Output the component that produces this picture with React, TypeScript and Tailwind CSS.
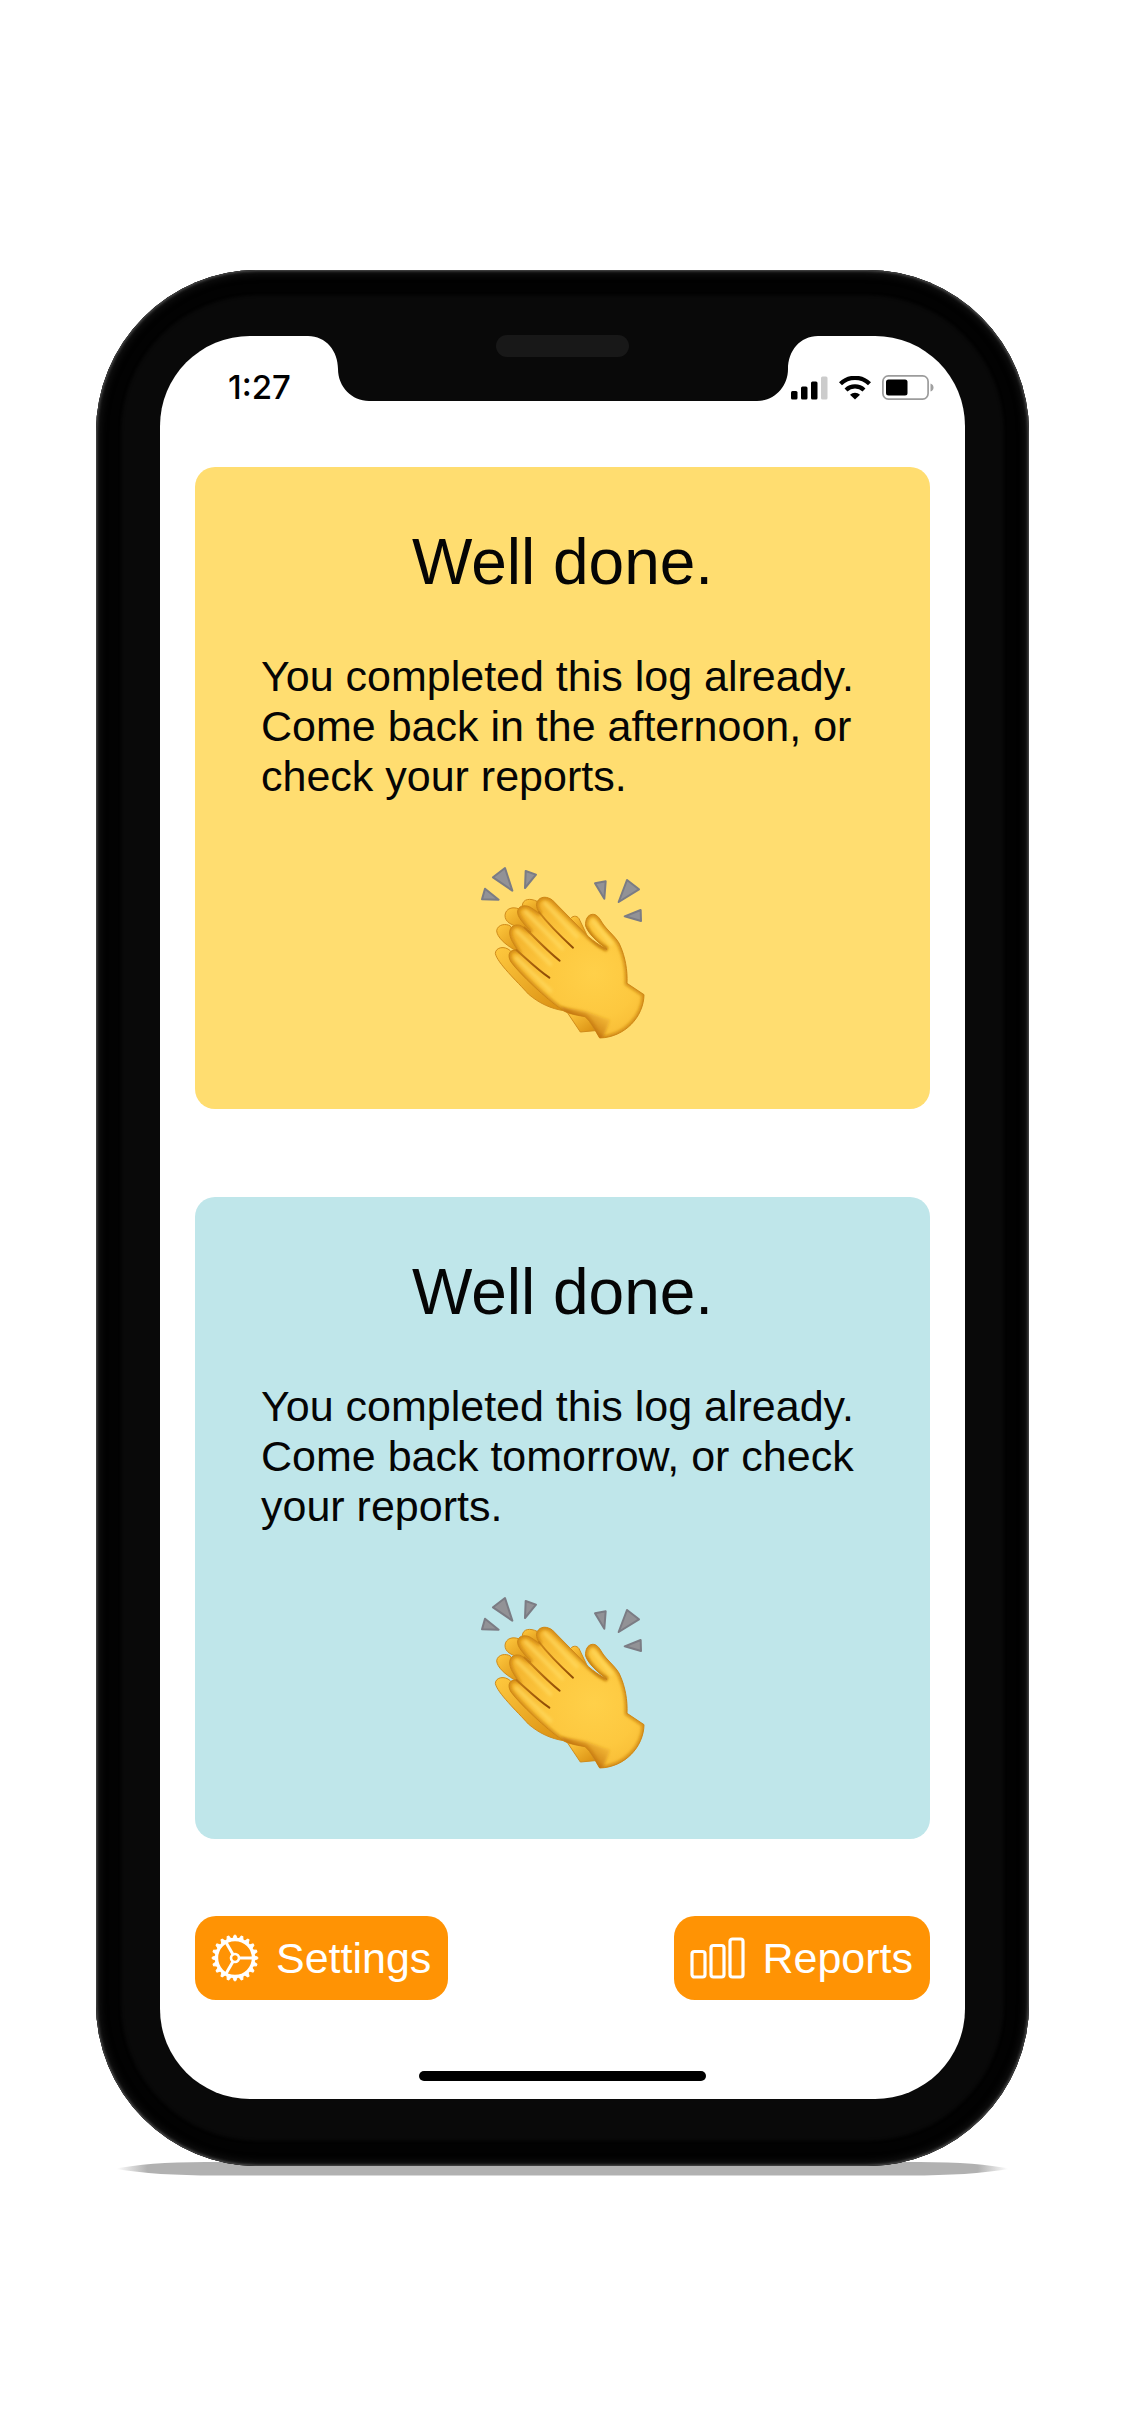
import { useId } from "react";

function Clap() {
  const id = useId().replace(/[^a-zA-Z0-9]/g, "");
  const skin = `skin${id}`;
  const back = `back${id}`;
  const palm = `palm${id}`;
  const finger = `finger${id}`;
  const soft = `soft${id}`;
  const clip = `clip${id}`;
  const front =
    "M152 366 C138 344 150 324 172 332 C164 316 146 296 148 274 C152 252 176 250 190 262 L212 276 C196 256 168 232 172 212 C176 194 200 194 214 204 L240 222 C228 206 224 192 234 180 C244 168 262 170 276 180 L384 290 C398 302 420 318 440 328 C412 306 384 282 376 258 C374 240 382 224 396 223 C408 222 416 232 424 246 C438 270 472 294 480 318 C494 350 502 390 500 430 L551 464 C550 530 494 592 418 594 C404 572 394 546 374 530 C340 524 318 520 300 506 C262 480 178 402 152 366 Z";
  return (
    <svg viewBox="-7 0 630 660" className="h-[220px] w-[210px]" role="img" aria-label="Clapping hands">
      <defs>
        <radialGradient id={palm} gradientUnits="userSpaceOnUse" cx="400" cy="400" r="270">
          <stop offset="0" stopColor="#FFD049" />
          <stop offset="0.5" stopColor="#FDC83F" />
          <stop offset="1" stopColor="#F3B22D" />
        </radialGradient>
        <linearGradient id={back} x1="0" y1="0" x2="1" y2="1">
          <stop offset="0" stopColor="#FFC93F" />
          <stop offset="1" stopColor="#D98E10" />
        </linearGradient>
        <linearGradient id={skin} gradientUnits="userSpaceOnUse" x1="380" y1="590" x2="450" y2="500">
          <stop offset="0" stopColor="#B9690A" />
          <stop offset="1" stopColor="#E59B1A" stopOpacity="0" />
        </linearGradient>
        <linearGradient id={finger} gradientUnits="userSpaceOnUse" x1="230" y1="220" x2="340" y2="330">
          <stop offset="0" stopColor="#C27A10" stopOpacity="0.7" />
          <stop offset="0.6" stopColor="#A8600C" />
          <stop offset="1" stopColor="#8F4C04" />
        </linearGradient>
        <filter id={soft} x="-20%" y="-20%" width="140%" height="140%">
          <feGaussianBlur stdDeviation="5" />
        </filter>
        <clipPath id={clip}>
          <path d={front} />
        </clipPath>
      </defs>
      <g fill="#929296" stroke="#7B7C84" strokeWidth="6" strokeLinejoin="round">
        <path d="M74 146 L115 179 L65 178 Z" />
        <path d="M134 84 L156 152 L98 112 Z" />
        <path d="M196 93 L227 104 L194 144 Z" />
        <path d="M404 130 L436 124 L432 176 Z" />
        <path d="M500 120 L536 148 L475 186 Z" />
        <path d="M493 229 L541 210 L542 243 Z" />
      </g>
      <g fill={`url(#${back})`} stroke="#D08B1A" strokeWidth="3">
        <path d="M330 236 C340 224 354 228 358 240 L382 290 L350 280 Z" />
        <path d="M320 516 L360 576 L404 572 L376 524 Z" />
        <path d="M186 196 C188 176 210 174 230 184 L250 220 L200 220 Z" />
        <path d="M134 226 C136 204 158 200 174 206 L216 270 L176 262 C152 254 134 246 134 226 Z" />
        <path d="M109 272 C112 252 138 250 150 258 L190 334 L160 328 C136 314 110 292 109 272 Z" />
        <path d="M105 340 C106 322 132 316 150 332 L310 512 C272 506 236 490 204 462 C170 424 110 368 105 340 Z" />
      </g>
      <path d={front} fill={`url(#${palm})`} stroke="#D08A18" strokeWidth="3" strokeLinejoin="round" />
      <g clipPath={`url(#${clip})`}>
        <path d={front} fill="none" stroke="#CC8210" strokeOpacity="0.8" strokeWidth="14" filter={`url(#${soft})`} />
        <path d="M300 500 L374 514 L450 540 L424 604 L384 604 Z" fill={`url(#${skin})`} filter={`url(#${soft})`} />
        <path d="M376 262 C390 296 410 316 440 328" stroke="#C17B10" strokeWidth="9" fill="none" filter={`url(#${soft})`} />
      </g>
      <g fill="none" stroke={`url(#${finger})`} strokeWidth="6" strokeLinecap="round">
        <path d="M236 216 C262 250 302 290 338 323" />
        <path d="M192 262 C226 296 262 334 298 362" />
        <path d="M168 330 C196 354 232 390 267 413" />
      </g>
      <g fill="none" stroke="#FFDC62" strokeOpacity="0.65" strokeWidth="12" strokeLinecap="round" filter={`url(#${soft})`}>
        <path d="M254 190 L350 290" />
        <path d="M196 216 L306 326" />
        <path d="M170 274 L270 372" />
        <path d="M168 354 L270 452" />
        <path d="M398 244 L452 310" />
      </g>
    </svg>
  );
}

function GearIcon() {
  const teeth = Array.from({ length: 20 }, (_, i) => i * 18);
  return (
    <svg viewBox="-24 -24 48 48" className="size-12" fill="none" stroke="currentColor" aria-hidden="true">
      <circle r="18.5" strokeWidth="3.4" />
      <circle r="4" strokeWidth="2.6" />
      {teeth.map((angle) => (
        <path key={angle} d="M19.5 -2 L22.8 -0.8 V0.8 L19.5 2 Z" fill="currentColor" strokeWidth="1" transform={`rotate(${angle})`} />
      ))}
      {[0, 120, 240].map((angle) => (
        <path key={angle} d="M4 0 H19" strokeWidth="3" transform={`rotate(${angle})`} />
      ))}
    </svg>
  );
}

function BarsIcon() {
  return (
    <svg viewBox="0 0 56 42" className="h-[42px] w-14" fill="none" stroke="currentColor" strokeWidth="3.2" aria-hidden="true">
      <rect x="2" y="14.5" width="13" height="25.5" rx="2.5" />
      <rect x="21" y="8.5" width="13" height="31.5" rx="2.5" />
      <rect x="40" y="2" width="13" height="38" rx="2.5" />
    </svg>
  );
}

function StatusIcons() {
  return (
    <div className="flex items-center gap-[11px]">
      <svg viewBox="0 0 37 24" className="h-6 w-[37px]" aria-label="Signal">
        <rect x="0" y="15" width="6.5" height="8.5" rx="1.5" />
        <rect x="10" y="10.5" width="6.5" height="13" rx="1.5" />
        <rect x="20" y="5.5" width="6.5" height="18" rx="1.5" />
        <rect x="30" y="0.5" width="6.5" height="23" rx="1.5" fill="#CCCCCC" />
      </svg>
      <svg viewBox="0 0 32 24" className="h-6 w-8" aria-label="Wi-Fi">
        <path d="M1.5 7.8 A20.5 20.5 0 0 1 30.5 7.8" fill="none" stroke="#000" strokeWidth="4.2" />
        <path d="M7 14 A13 13 0 0 1 25 14" fill="none" stroke="#000" strokeWidth="4.2" />
        <path d="M16 23.5 L11 18.8 A7.2 7.2 0 0 1 21 18.8 Z" />
      </svg>
      <svg viewBox="0 0 52 25" className="h-[25px] w-[52px]" aria-label="Battery">
        <rect x="0.9" y="0.9" width="45.2" height="23.2" rx="5.5" fill="none" stroke="#9C9C9C" strokeWidth="1.7" />
        <rect x="4" y="4.5" width="21.5" height="16" rx="2.5" />
        <path d="M48.5 8.5 Q51.5 9.5 51.5 12.5 Q51.5 15.5 48.5 16.5 Z" fill="#A0A0A0" />
      </svg>
    </div>
  );
}

function Card({ color, message }: { color: string; message: string }) {
  return (
    <section className={`flex flex-col items-center rounded-[20px] px-[66px] pt-[60px] pb-[49px] ${color}`}>
      <h2 className="text-[64px] leading-[70px]">Well done.</h2>
      <p className="mt-[54px] w-full text-[43px] leading-[50px]">{message}</p>
      <div className="mt-[39px]">
        <Clap />
      </div>
    </section>
  );
}

const buttonClass =
  "flex h-[84px] items-center rounded-[21px] bg-[#FF9304] text-[43px] leading-[50px] text-white";

export default function App() {
  return (
    <main className="min-h-screen bg-white px-24 pt-[270px] pb-[260px] font-['Liberation_Sans',Arial,sans-serif] text-[#050505]">
      <div className="relative">
        <svg viewBox="0 0 900 16" preserveAspectRatio="none" className="absolute inset-x-5 -bottom-[10px] h-4 w-[calc(100%-40px)]" aria-hidden="true">
          <defs>
            <linearGradient id="ground">
              <stop offset="0" stopColor="#B1B1B1" stopOpacity="0" />
              <stop offset="0.035" stopColor="#B1B1B1" />
              <stop offset="0.965" stopColor="#B1B1B1" />
              <stop offset="1" stopColor="#B1B1B1" stopOpacity="0" />
            </linearGradient>
          </defs>
          <path d="M0 9 Q30 2 90 2 H810 Q870 2 900 9 Q860 15.5 800 15.5 H100 Q40 15.5 0 9 Z" fill="url(#ground)" />
        </svg>
        <div className="relative rounded-[162px] bg-[#090909] px-16 pt-[66px] pb-[67px] shadow-[inset_0_0_3px_1px_#555,inset_0_0_8px_3px_#181818,inset_0_0_3px_25px_#020202]">
          <div className="relative rounded-[90px] bg-white px-[35px] pb-[18px]">
            <svg viewBox="0 0 510 67" className="absolute -top-px left-1/2 h-[67px] w-[510px] -translate-x-1/2" aria-hidden="true">
              <path d="M0 0 V1 C18 1 30 16 30 34 C30 52 44 66 61 66 H449 C466 66 480 52 480 34 C480 16 492 1 510 1 V0 Z" fill="#090909" />
              <rect x="188" y="0" width="133" height="22" rx="11" fill="#181818" />
            </svg>
            <header className="flex h-[131px] items-start justify-between pt-[31px] pl-[33px]">
              <time className="font-['Inter',sans-serif] text-[33px] leading-10 font-medium text-black">1:27</time>
              <div className="-mr-1 pt-2">
                <StatusIcons />
              </div>
            </header>
            <div className="flex flex-col gap-[88px]">
              <Card color="bg-[#FFDD70]" message="You completed this log already. Come back in the afternoon, or check your reports." />
              <Card color="bg-[#BFE6EA]" message="You completed this log already. Come back tomorrow, or check your reports." />
            </div>
            <nav className="mt-[77px] flex justify-between">
              <button type="button" className={`${buttonClass} gap-[17px] pr-[17px] pl-4`}>
                <GearIcon />
                Settings
              </button>
              <button type="button" className={`${buttonClass} gap-4 pr-[17px] pl-4`}>
                <BarsIcon />
                Reports
              </button>
            </nav>
            <div className="mx-auto mt-[71px] h-[10px] w-[287px] rounded-full bg-black" />
          </div>
        </div>
      </div>
    </main>
  );
}
